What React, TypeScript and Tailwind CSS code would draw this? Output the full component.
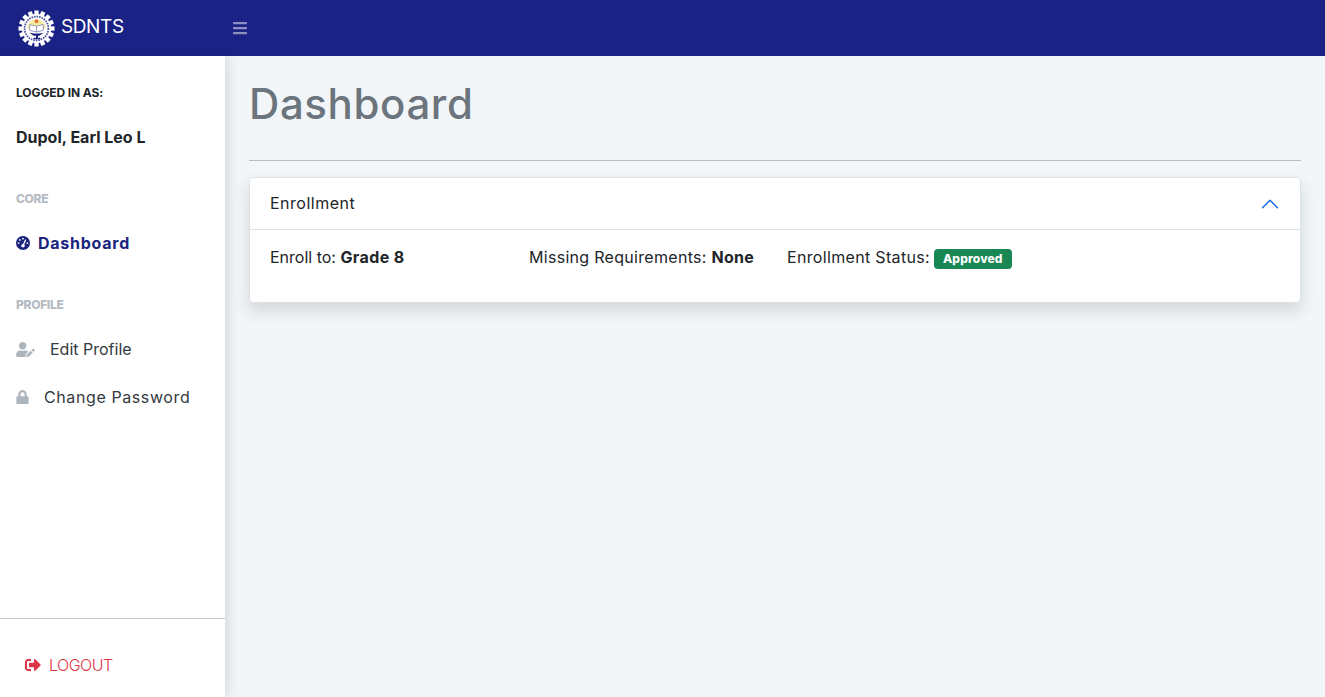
import { FaBars, FaLock, FaSignOutAlt, FaUserEdit } from 'react-icons/fa';
import { FaGaugeHigh } from 'react-icons/fa6';

function Logo() {
  const teeth = Array.from({ length: 16 }, (_, i) => i * 22.5);
  return (
    <svg viewBox="0 0 38 38" className="w-[37px] h-[37px]">
      {teeth.map((a) => (
        <rect key={a} x="16.8" y="0.5" width="4.4" height="5.5" fill="#fff" transform={`rotate(${a} 19 19)`} />
      ))}
      <circle cx="19" cy="19" r="15" fill="#fff" />
      <circle cx="19" cy="19" r="12.2" fill="none" stroke="#4a4f9e" strokeWidth="1.8" strokeDasharray="1.6 1" />
      <circle cx="19" cy="19" r="10.6" fill="#fff" />
      <path d="M9.5 19a9.5 9.5 0 0 1 19 0z" fill="#f6ec9c" />
      <circle cx="19" cy="11.5" r="2" fill="#e8743c" />
      <path d="M12 15l7 1.5 7-1.5v6l-7 1.5-7-1.5z" fill="#fff" stroke="#6a6fb0" strokeWidth="0.7" />
      <path d="M19 16.5v6" stroke="#6a6fb0" strokeWidth="0.7" />
      <path d="M11.5 23c3 1.5 12 1.5 15 0l-4.5 3.5h-1.5v2h2.5v1.5h-7v-1.5h2.5v-2H16z" fill="#1a237e" />
    </svg>
  );
}

function Topbar() {
  return (
    <nav className="h-14 shrink-0 bg-[#1a2385] flex items-center text-white">
      <div className="w-[225px] pl-[18px] flex items-center gap-[6px]">
        <Logo />
        <span className="pb-[3px] text-[19px] leading-none tracking-[-0.4px]">SDNTS</span>
      </div>
      <button className="ml-2 text-[#8d91c2]">
        <FaBars className="w-[14px] h-[16px]" />
      </button>
    </nav>
  );
}

function SectionLabel({ children }: { children: string }) {
  return <div className="text-[12px] leading-[18px] font-extrabold text-[#b4bbc2] tracking-[-0.3px]">{children}</div>;
}

function Sidebar() {
  return (
    <aside className="w-[225px] shrink-0 bg-white shadow-[4px_0_10px_rgba(33,40,50,0.12)] flex flex-col relative z-10">
      <div className="flex-1 pl-4 pt-[28px]">
        <div className="text-[12px] leading-[18px] font-bold text-[#212529] tracking-[-0.1px]">LOGGED IN AS:</div>
        <div className="mt-[23px] text-[16px] leading-6 font-bold text-[#212529]">Dupol, Earl Leo L</div>

        <div className="mt-[41px]">
          <SectionLabel>CORE</SectionLabel>
        </div>
        <a className="mt-[23px] flex items-center text-[#1a237e] font-bold text-[16px] leading-6 tracking-[0.75px]">
          <FaGaugeHigh className="w-[14px] h-[14px]" />
          <span className="ml-[8px]">Dashboard</span>
        </a>

        <div className="mt-[41px]">
          <SectionLabel>PROFILE</SectionLabel>
        </div>
        <a className="mt-[23px] flex items-center text-[#343a40] text-[16px] leading-6">
          <FaUserEdit className="w-[19px] h-[15px] text-[#adb5bd]" />
          <span className="ml-[15px]">Edit Profile</span>
        </a>
        <a className="mt-6 flex items-center text-[#343a40] text-[16px] leading-6">
          <FaLock className="w-[13px] h-[14px] text-[#adb5bd]" />
          <span className="ml-[15px] tracking-[0.6px]">Change Password</span>
        </a>
      </div>
      <div className="h-[79px] border-t border-[#c8c8c8] pl-[25px] pt-[14px] flex items-center text-[#dc3545] text-[16px] font-light">
        <FaSignOutAlt className="w-4 h-4" />
        <span className="ml-2 tracking-[-0.5px]">LOGOUT</span>
      </div>
    </aside>
  );
}

function EnrollmentCard() {
  return (
    <div className="mt-4 bg-white rounded-[4px] border border-[#dee2e6] shadow-[0_8px_16px_rgba(33,37,41,0.15)] text-[16px] text-[#212529]">
      <div className="h-[52px] px-5 flex items-center justify-between border-b border-[#dee2e6]">
        <span className="pb-[2px] tracking-[0.5px]">Enrollment</span>
        <svg viewBox="0 0 16 16" fill="#0c63e4" className="w-5 h-5 rotate-180">
          <path d="M1.646 4.646a.5.5 0 0 1 .708 0L8 10.293l5.646-5.647a.5.5 0 0 1 .708.708l-6 6a.5.5 0 0 1-.708 0l-6-6a.5.5 0 0 1 0-.708z" />
        </svg>
      </div>
      <div className="h-[72px] px-5 pt-[15px] flex leading-6">
        <div className="w-[259px]">
          Enroll to: <b className="tracking-[0.4px]">Grade 8</b>
        </div>
        <div className="w-[258px] tracking-[0.3px]">
          Missing Requirements: <b>None</b>
        </div>
        <div className="flex items-start">
          <span className="tracking-[0.33px]">Enrollment Status:</span>
          <span className="ml-1 mt-1 h-5 px-[9px] rounded-[4px] bg-[#198754] text-white text-[12px] leading-5 font-extrabold tracking-[0.15px]">Approved</span>
        </div>
      </div>
    </div>
  );
}

export default function App() {
  return (
    <div className="h-[697px] flex flex-col overflow-hidden bg-[#f2f6f9] font-['Inter','Liberation_Sans',sans-serif]">
      <Topbar />
      <div className="flex-1 flex min-h-0">
        <Sidebar />
        <main className="flex-1 px-6">
          <h1 className="pt-[18px] text-[42px] leading-[60px] font-medium text-[#6c757d] tracking-[0.6px]">Dashboard</h1>
          <hr className="mt-[26px] border-0 border-t border-[#b9bdc2]" />
          <EnrollmentCard />
        </main>
      </div>
    </div>
  );
}
